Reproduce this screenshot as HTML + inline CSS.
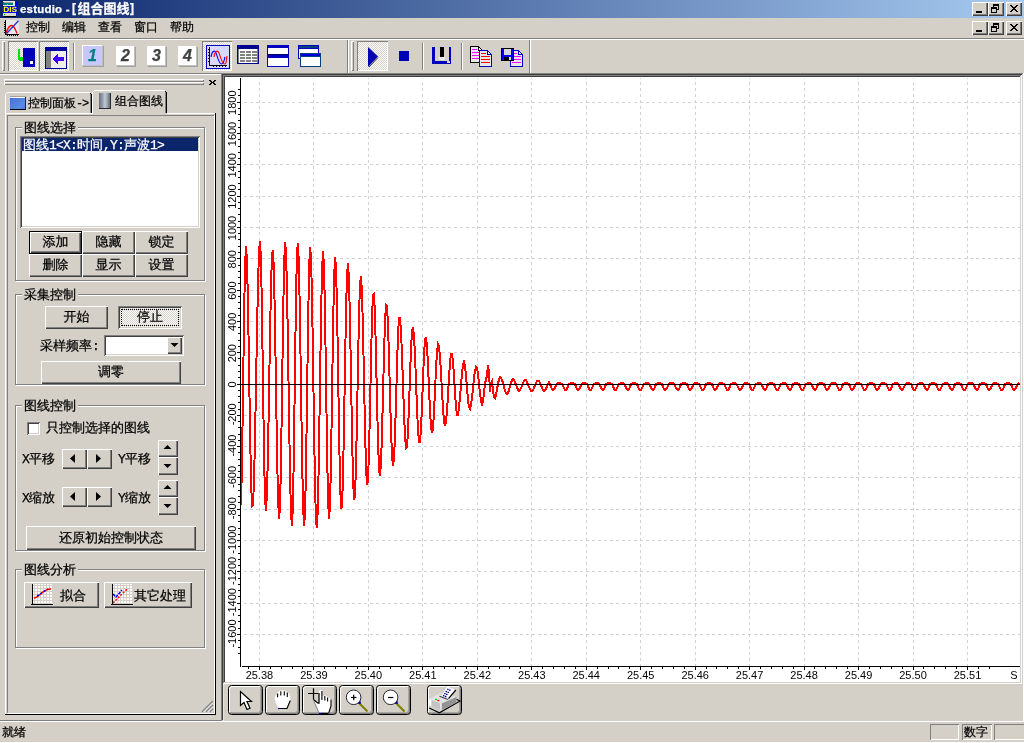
<!DOCTYPE html>
<html lang="zh-CN"><head><meta charset="utf-8"><title>estudio - [组合图线]</title>
<style>
*{box-sizing:border-box;margin:0;padding:0}
html,body{width:1024px;height:743px;overflow:hidden;background:#d4d0c8}
body{position:relative;font-family:"Liberation Sans","WenQuanYi Zen Hei",sans-serif;font-size:13px;color:#000;line-height:1;-webkit-text-stroke:0.25px}
#w{position:absolute;left:0;top:0;width:1024px;height:743px;opacity:0.999}
.a{position:absolute}
.t12{font-size:12px;line-height:12px;white-space:nowrap}
.t13{font-size:13px;line-height:13px;white-space:nowrap}
.btn{position:absolute;background:#d4d0c8;box-shadow:inset 1px 1px #fff,inset -1px -1px #404040,inset -2px -2px #808080;text-align:center;font-size:13px;white-space:nowrap}
.btn span{position:absolute;left:0;right:0;text-align:center;line-height:13px}
.sunk{position:absolute;box-shadow:inset 1px 1px #808080,inset -1px -1px #fff,inset 2px 2px #404040,inset -2px -2px #d4d0c8}
.dith{background:repeating-conic-gradient(#fff 0% 25%,#d4d0c8 0% 50%) 0 0/2px 2px}
.gb{position:absolute;border:1px solid #808080;box-shadow:inset 1px 1px #fff,1px 1px #fff}
.gbl{position:absolute;background:#d4d0c8;font-size:13px;line-height:13px;white-space:nowrap;padding:0 2px}
.hl{position:absolute;height:1px}
.vl{position:absolute;width:1px}
svg{position:absolute;overflow:visible}
svg text{-webkit-text-stroke:0}
.m{font-family:"Liberation Mono","WenQuanYi Zen Hei",monospace}
</style></head>
<body>
<div id="w">
<div class="a" style="left:0;top:0;width:1024px;height:18px;background:linear-gradient(90deg,rgba(10,36,106,0.998) 0%,rgba(166,202,240,0.998) 100%)"></div>
<svg style="left:2px;top:1px" width="16" height="16" viewBox="0 0 16 16" shape-rendering="crispEdges"><rect x="1" y="0" width="12" height="5" fill="#e8e8e8"/><rect x="1" y="1" width="10" height="3" fill="#008080"/><rect x="2" y="1" width="9" height="1" fill="#a0a0a0"/><rect x="5" y="3" width="1" height="1" fill="#00ff00"/><rect x="1" y="5" width="15" height="9" fill="#0000ff"/><rect x="13" y="1" width="3" height="5" fill="#0000ff"/><rect x="1" y="12" width="13" height="3" fill="#d8d8d8"/><rect x="2" y="15" width="12" height="1" fill="#000"/><rect x="2" y="13" width="1" height="1" fill="#00a000"/><text x="1.2" y="11.3" font-family="Liberation Sans,sans-serif" font-weight="bold" font-size="7.5" fill="#ffff00" textLength="14" lengthAdjust="spacingAndGlyphs" style="text-rendering:geometricPrecision">DIS</text></svg>
<div class="a" style="left:20px;top:2px;height:14px;color:#fff;font-weight:bold;white-space:nowrap;font-family:'Liberation Sans','Noto Sans CJK SC',sans-serif;line-height:14px;font-size:11.5px;letter-spacing:0.2px">estudio -</div>
<div class="a" style="left:72px;top:1px;height:14px;color:#fff;font-weight:bold;white-space:nowrap;font-family:'Liberation Sans','Noto Sans CJK SC',sans-serif;line-height:14px;font-size:12px">[</div>
<div class="a" style="left:77.500px;top:2px;height:14px;color:#fff;font-weight:bold;white-space:nowrap;font-family:'Liberation Sans','Noto Sans CJK SC',sans-serif;line-height:14px;font-size:13px;top:2px">组合图线</div>
<div class="a" style="left:130px;top:1px;height:14px;color:#fff;font-weight:bold;white-space:nowrap;font-family:'Liberation Sans','Noto Sans CJK SC',sans-serif;line-height:14px;font-size:12px">]</div>
<div class="a" style="left:972px;top:2px;width:16px;height:14px;background:#d4d0c8;box-shadow:inset 1px 1px #fff,inset -1px -1px #404040,inset -2px -2px #808080"><div class="a" style="left:4px;top:9px;width:6px;height:2px;background:#000"></div></div>
<div class="a" style="left:972px;top:21px;width:16px;height:14px;background:#d4d0c8;box-shadow:inset 1px 1px #fff,inset -1px -1px #404040,inset -2px -2px #808080"><div class="a" style="left:4px;top:9px;width:6px;height:2px;background:#000"></div></div>
<div class="a" style="left:988px;top:2px;width:16px;height:14px;background:#d4d0c8;box-shadow:inset 1px 1px #fff,inset -1px -1px #404040,inset -2px -2px #808080"><div class="a" style="left:5px;top:2px;width:6px;height:6px;border:1px solid #000;border-top-width:2px"></div><div class="a" style="left:3px;top:5px;width:6px;height:6px;border:1px solid #000;border-top-width:2px;background:#d4d0c8"></div></div>
<div class="a" style="left:988px;top:21px;width:16px;height:14px;background:#d4d0c8;box-shadow:inset 1px 1px #fff,inset -1px -1px #404040,inset -2px -2px #808080"><div class="a" style="left:5px;top:2px;width:6px;height:6px;border:1px solid #000;border-top-width:2px"></div><div class="a" style="left:3px;top:5px;width:6px;height:6px;border:1px solid #000;border-top-width:2px;background:#d4d0c8"></div></div>
<div class="a" style="left:1006px;top:2px;width:16px;height:14px;background:#d4d0c8;box-shadow:inset 1px 1px #fff,inset -1px -1px #404040,inset -2px -2px #808080"><svg style="left:4px;top:3px" width="8" height="7" viewBox="0 0 8 7" shape-rendering="crispEdges"><path d="M0 0h2v1h1v1h2v-1h1v-1h2v1h-1v1h-1v1h-1v1h1v1h1v1h1v1h-2v-1h-1v-1h-2v1h-1v1h-2v-1h1v-1h1v-1h1v-1h-1v-1h-1v-1h-1z" fill="#000"/></svg></div>
<div class="a" style="left:1006px;top:21px;width:16px;height:14px;background:#d4d0c8;box-shadow:inset 1px 1px #fff,inset -1px -1px #404040,inset -2px -2px #808080"><svg style="left:4px;top:3px" width="8" height="7" viewBox="0 0 8 7" shape-rendering="crispEdges"><path d="M0 0h2v1h1v1h2v-1h1v-1h2v1h-1v1h-1v1h-1v1h1v1h1v1h1v1h-2v-1h-1v-1h-2v1h-1v1h-2v-1h1v-1h1v-1h1v-1h-1v-1h-1v-1h-1z" fill="#000"/></svg></div>
<svg style="left:3px;top:20px" width="17" height="16" viewBox="0 0 17 16"><rect x="2" y="0" width="14" height="14" fill="#e8e8e8"/><path d="M2.5 0v14.5M2 14.5h14" stroke="#000" stroke-width="1" fill="none" shape-rendering="crispEdges"/><path d="M1 2h1M1 4h1M1 6h1M1 8h1M1 10h1M1 12h1M4 15v1M6 15v1M8 15v1M10 15v1M12 15v1M14 15v1" stroke="#000" stroke-width="1" shape-rendering="crispEdges"/><path d="M3 13.5C5 7 7 5.5 8.5 5.500S12 8 14 13.500" stroke="#ff0000" stroke-width="1.3" fill="none"/><path d="M3.500 13.500L15.500 0.800" stroke="#3030c0" stroke-width="1.300"/></svg>
<div class="a t12" style="left:26px;top:21px">控制</div>
<div class="a t12" style="left:62px;top:21px">编辑</div>
<div class="a t12" style="left:98px;top:21px">查看</div>
<div class="a t12" style="left:134px;top:21px">窗口</div>
<div class="a t12" style="left:170px;top:21px">帮助</div>
<div class="hl" style="left:0px;top:38px;width:1024px;background:#808080"></div>
<div class="hl" style="left:0px;top:39px;width:1024px;background:#fff"></div>
<div class="hl" style="left:0px;top:73px;width:1024px;background:#808080"></div>
<div class="hl" style="left:0px;top:74px;width:221px;background:#fff"></div>
<div class="a" style="left:2px;top:41px;width:3px;height:30px;box-shadow:inset 1px 1px #fff,inset -1px -1px #808080"></div>
<div class="a dith" style="left:8px;top:41px;width:30px;height:30px;box-shadow:inset 1px 1px #808080,inset -1px -1px #fff"></div>
<div class="a dith" style="left:39px;top:41px;width:30px;height:30px;box-shadow:inset 1px 1px #808080,inset -1px -1px #fff"></div>
<svg style="left:8px;top:41px" width="30" height="30" viewBox="0 0 30 30" shape-rendering="crispEdges"><rect x="15" y="7" width="12" height="19" fill="#0000b8"/><rect x="22" y="20" width="3" height="3" fill="#fff"/><path d="M10 8h2v9h3v2h-3v1h-1v-1h-1z" fill="#00e000"/><rect x="12" y="16" width="3" height="4" fill="#00e000"/></svg>
<svg style="left:39px;top:41px" width="30" height="30" viewBox="0 0 30 30" shape-rendering="crispEdges"><rect x="6" y="6" width="22" height="22" fill="#00009c"/><rect x="12" y="10" width="15" height="17" fill="#efede9"/><rect x="7" y="10" width="5" height="17" fill="#808080"/><path d="M14 18l4 -5h1v3h6v4h-6v3h-1z" fill="#4000ff"/></svg>
<div class="vl" style="left:73px;top:43px;height:27px;background:#808080"></div>
<div class="vl" style="left:74px;top:43px;height:27px;background:#fff"></div>
<div class="a" style="left:82px;top:45px;width:21px;height:21px;background:#c8c8ff;box-shadow:1px 1px 0 #a0a0a0,inset -1px -1px #c0c0c0,inset 1px 1px #fff;font-family:'Liberation Sans',sans-serif;font-weight:bold;font-style:italic;font-size:16px;line-height:21px;text-align:center;color:#008080">1</div>
<div class="a" style="left:116px;top:46px;width:19px;height:20px;background:#ffffff;box-shadow:1px 1px 0 #a0a0a0,inset -1px -1px #c0c0c0;font-family:'Liberation Sans',sans-serif;font-weight:bold;font-style:italic;font-size:16px;line-height:20px;text-align:center;color:#404040">2</div>
<div class="a" style="left:147px;top:46px;width:19px;height:20px;background:#ffffff;box-shadow:1px 1px 0 #a0a0a0,inset -1px -1px #c0c0c0;font-family:'Liberation Sans',sans-serif;font-weight:bold;font-style:italic;font-size:16px;line-height:20px;text-align:center;color:#404040">3</div>
<div class="a" style="left:178px;top:46px;width:19px;height:20px;background:#ffffff;box-shadow:1px 1px 0 #a0a0a0,inset -1px -1px #c0c0c0;font-family:'Liberation Sans',sans-serif;font-weight:bold;font-style:italic;font-size:16px;line-height:20px;text-align:center;color:#404040">4</div>
<div class="a dith" style="left:202px;top:41px;width:30px;height:30px;box-shadow:inset 1px 1px #808080,inset -1px -1px #fff"></div>
<svg style="left:206px;top:45px" width="24" height="24" viewBox="0 0 24 24"><rect x="0.5" y="0.5" width="23" height="23" fill="#d8d8ff" stroke="#0000c0" shape-rendering="crispEdges"/><path d="M3.5 2v19M3 20.500h18" stroke="#000" stroke-width="1.4" fill="none" shape-rendering="crispEdges"/><path d="M2 4h1M2 7h1M2 10h1M2 13h1M2 16h1M7 21v1M10 21v1M13 21v1M16 21v1M19 21v1" stroke="#000" shape-rendering="crispEdges"/><path d="M5 12C6 6 8.500 4.500 10 8S13 19 15.500 19 18 15 19 12" stroke="#0000ff" stroke-width="1.100" fill="none"/><path d="M8 12C9 6 11.500 4.500 13 8S16 19 18.500 19 20 15 21 11" stroke="#ff0000" stroke-width="1.100" fill="none"/></svg>
<svg style="left:237px;top:45px" width="22" height="19" viewBox="0 0 22 19" shape-rendering="crispEdges"><rect x="0" y="0" width="22" height="19" fill="#000090"/><rect x="1" y="4" width="20" height="14" fill="#fff"/><rect x="1" y="4" width="1" height="14" fill="#808080"/><rect x="3" y="6" width="5" height="2" fill="#808080"/><rect x="9" y="6" width="5" height="2" fill="#808080"/><rect x="15" y="6" width="5" height="2" fill="#808080"/><rect x="3" y="9" width="5" height="2" fill="#808080"/><rect x="9" y="9" width="5" height="2" fill="#808080"/><rect x="15" y="9" width="5" height="2" fill="#808080"/><rect x="3" y="12" width="5" height="2" fill="#808080"/><rect x="9" y="12" width="5" height="2" fill="#808080"/><rect x="15" y="12" width="5" height="2" fill="#808080"/><rect x="3" y="15" width="5" height="2" fill="#808080"/><rect x="9" y="15" width="5" height="2" fill="#808080"/><rect x="15" y="15" width="5" height="2" fill="#808080"/><rect x="20" y="4" width="1" height="14" fill="#808080"/></svg>
<svg style="left:267px;top:45px" width="22" height="22" viewBox="0 0 22 22" shape-rendering="crispEdges"><rect x="0" y="0" width="22" height="22" fill="#0000c0"/><rect x="1" y="3" width="20" height="6" fill="#fff"/><rect x="1" y="9" width="20" height="1" fill="#000060"/><rect x="1" y="13" width="20" height="8" fill="#fff"/></svg>
<svg style="left:298px;top:45px" width="23" height="22" viewBox="0 0 23 22" shape-rendering="crispEdges"><rect x="0" y="0" width="21" height="14" fill="#0000c0"/><rect x="1" y="1" width="19" height="2" fill="#004080"/><rect x="1" y="4" width="19" height="9" fill="#fff"/><rect x="2" y="8" width="21" height="14" fill="#004080"/><rect x="3" y="9" width="19" height="2" fill="#0000e0"/><rect x="3" y="12" width="19" height="9" fill="#fff"/></svg>
<div class="vl" style="left:347px;top:40px;height:33px;background:#808080"></div>
<div class="vl" style="left:348px;top:40px;height:33px;background:#fff"></div>
<div class="a" style="left:351px;top:41px;width:3px;height:30px;box-shadow:inset 1px 1px #fff,inset -1px -1px #808080"></div>
<div class="a dith" style="left:357px;top:41px;width:31px;height:30px;box-shadow:inset 1px 1px #808080,inset -1px -1px #fff"></div>
<svg style="left:357px;top:41px" width="31" height="30" viewBox="0 0 31 30"><path d="M11 6L21 15.500L11 26z" fill="#0000b4"/><path d="M21 16.500L12 26" stroke="#404040" stroke-width="1"/></svg>
<div class="a" style="left:399px;top:51px;width:10px;height:10px;background:#0000b4"></div>
<div class="vl" style="left:422px;top:43px;height:27px;background:#808080"></div>
<div class="vl" style="left:423px;top:43px;height:27px;background:#fff"></div>
<svg style="left:432px;top:47px" width="20" height="17" viewBox="0 0 20 17" shape-rendering="crispEdges"><path d="M0 0h2.500v14h14v-14h2.500v17h-19z" fill="#0000c0"/><rect x="8" y="0" width="4" height="10" fill="#000"/><rect x="7" y="10" width="6" height="3" fill="#e8e8e8"/><rect x="15" y="14" width="3" height="2" fill="#d4d0c8"/></svg>
<div class="vl" style="left:461px;top:43px;height:27px;background:#808080"></div>
<div class="vl" style="left:462px;top:43px;height:27px;background:#fff"></div>
<svg style="left:470px;top:46px" width="23" height="21" viewBox="0 0 23 21" shape-rendering="crispEdges"><path d="M0.5 0.5h8l4 4v12h-12z" fill="#e8e8e8" stroke="#000"/><path d="M8.5 0.5v4h4" fill="none" stroke="#000"/><rect x="2" y="3" width="5" height="1" fill="#ff00ff"/><rect x="2" y="6" width="9" height="1" fill="#ff00ff"/><rect x="2" y="9" width="9" height="1" fill="#ff00ff"/><rect x="2" y="12" width="9" height="1" fill="#ff00ff"/><path d="M9.5 4.5h8l4 4v12h-12z" fill="#e8e8e8" stroke="#0000c0"/><path d="M17.5 4.5v4h4" fill="none" stroke="#0000c0"/><rect x="11" y="7" width="5" height="1" fill="#ff0000"/><rect x="11" y="10" width="9" height="1" fill="#ff0000"/><rect x="11" y="13" width="9" height="1" fill="#ff0000"/><rect x="11" y="16" width="9" height="1" fill="#ff0000"/></svg>
<svg style="left:501px;top:48px" width="23" height="19" viewBox="0 0 23 19" shape-rendering="crispEdges"><path d="M9.5 2.5h8l4 4v12h-12z" fill="#e8e8e8" stroke="#0000c0"/><path d="M17.5 2.5v4h4" fill="none" stroke="#0000c0"/><rect x="11" y="5" width="5" height="1" fill="#ff00ff"/><rect x="11" y="8" width="9" height="1" fill="#ff00ff"/><rect x="11" y="11" width="9" height="1" fill="#ff00ff"/><rect x="11" y="14" width="9" height="1" fill="#ff00ff"/><rect x="0" y="0" width="13" height="13" fill="#000"/><rect x="1" y="1" width="11" height="11" fill="#0000ff"/><rect x="3" y="1" width="7" height="6" fill="#d8d8d8"/><rect x="3" y="9" width="7" height="3" fill="#000"/><rect x="8" y="9" width="2" height="3" fill="#d8d8d8"/></svg>
<div class="vl" style="left:529px;top:40px;height:33px;background:#808080"></div>
<div class="vl" style="left:530px;top:40px;height:33px;background:#fff"></div>
<div class="hl" style="left:0px;top:721px;width:1024px;background:#fff"></div>
<div class="a t12" style="left:2px;top:726px">就绪</div>
<div class="a" style="left:930px;top:724px;width:29px;height:16px;box-shadow:inset 1px 1px #808080,inset -1px -1px #fff"></div>
<div class="a" style="left:962px;top:724px;width:30px;height:16px;box-shadow:inset 1px 1px #808080,inset -1px -1px #fff"></div>
<div class="a" style="left:994px;top:724px;width:32px;height:16px;box-shadow:inset 1px 1px #808080,inset -1px -1px #fff"></div>
<div class="a t12" style="left:964px;top:726px">数字</div>
<div class="hl" style="left:0px;top:742px;width:1024px;background:#fff"></div>
<div class="a" style="left:4px;top:79px;width:200px;height:3px;box-shadow:inset 1px 1px #fff,inset -1px -1px #808080"></div>
<div class="a" style="left:4px;top:82px;width:200px;height:3px;box-shadow:inset 1px 1px #fff,inset -1px -1px #808080"></div>
<svg style="left:209px;top:80px" width="7" height="5" viewBox="0 0 7 5" shape-rendering="crispEdges"><path d="M0 0h2v1h1v1h1v-1h1v-1h2v1h-1v1h-1v1h1v1h1v1h-2v-1h-1v-1h-1v1h-1v1h-2v-1h1v-1h1v-1h-1v-1h-1z" fill="#000"/></svg>
<div class="hl" style="left:0px;top:720px;width:221px;background:#808080"></div>
<div class="vl" style="left:5px;top:113px;height:601px;background:#fff"></div>
<div class="hl" style="left:5px;top:113px;width:210px;background:#fff"></div>
<div class="vl" style="left:7px;top:115px;height:598px;background:#808080"></div>
<div class="hl" style="left:7px;top:115px;width:207px;background:#808080"></div>
<div class="vl" style="left:214px;top:115px;height:599px;background:#fff"></div>
<div class="hl" style="left:7px;top:713px;width:208px;background:#fff"></div>
<div class="vl" style="left:215px;top:113px;height:602px;background:#000"></div>
<div class="hl" style="left:5px;top:714px;width:211px;background:#000"></div>
<div class="hl" style="left:7px;top:92px;width:83px;background:#fff"></div>
<div class="vl" style="left:5px;top:94px;height:19px;background:#fff"></div>
<div class="a" style="left:6px;top:93px;width:1px;height:1px;background:#fff"></div>
<div class="vl" style="left:90px;top:94px;height:19px;background:#808080"></div>
<div class="vl" style="left:91px;top:94px;height:19px;background:#000"></div>
<div class="a" style="left:90px;top:93px;width:1px;height:1px;background:#000"></div>
<div class="a" style="left:10px;top:96px;width:16px;height:14px;background:linear-gradient(135deg,#3f6fd2,#5a8ae6 70%,#4a7cdc)"></div>
<div class="hl" style="left:10px;top:96px;width:16px;background:#a0a0a0"></div>
<div class="hl" style="left:10px;top:97px;width:15px;background:#fff"></div>
<div class="hl" style="left:10px;top:109px;width:16px;background:#000"></div>
<div class="vl" style="left:25px;top:97px;height:12px;background:#10206a"></div>
<div class="a t12" style="left:28px;top:97px">控制面板<span class="m" style="letter-spacing:-1.2px">-&gt;</span></div>
<div class="a" style="left:92px;top:90px;width:75px;height:24px;background:#d4d0c8"></div>
<div class="hl" style="left:94px;top:90px;width:71px;background:#fff"></div>
<div class="vl" style="left:92px;top:92px;height:22px;background:#fff"></div>
<div class="a" style="left:93px;top:91px;width:1px;height:1px;background:#fff"></div>
<div class="vl" style="left:165px;top:92px;height:21px;background:#808080"></div>
<div class="vl" style="left:166px;top:92px;height:21px;background:#000"></div>
<div class="a" style="left:165px;top:91px;width:1px;height:1px;background:#000"></div>
<div class="a" style="left:99px;top:93px;width:12px;height:16px;background:linear-gradient(90deg,#68707c,#98a0b0 30%,#c4c8d4 50%,#98a0b0 70%,#505860);box-shadow:inset -1px -1px #282c30"></div>
<div class="a t12" style="left:115px;top:95px">组合图线</div>
<div class="a" style="left:15px;top:127px;width:190px;height:154px;border:1px solid #808080"></div><div class="a" style="left:16px;top:128px;width:190px;height:154px;border:1px solid #fff;border-right-color:#fff;border-bottom-color:#fff;clip-path:polygon(0 0,188px 0,188px 1px,1px 1px,1px 152px,0 152px,0 154px,190px 154px,190px 0,189px 0,189px 153px,0 153px)"></div><div class="gbl" style="left:22px;top:121px">图线选择</div>
<div class="sunk" style="left:20px;top:136px;width:180px;height:92px;background:#fff"></div>
<div class="a" style="left:22px;top:138px;width:176px;height:13px;background:rgba(10,36,106,0.998)"></div>
<div class="a t13" style="left:23px;top:138px;color:#fff;letter-spacing:0">图线<span class="m" style="letter-spacing:-0.8px">1&lt;X:</span>时间<span class="m" style="letter-spacing:-0.8px">,Y:</span>声波<span class="m" style="letter-spacing:-0.8px">1&gt;</span></div>
<div class="a" style="left:29px;top:231px;width:53px;height:23px;background:#000"></div><div class="btn" style="left:30px;top:232px;width:51px;height:21px"><span style="top:3px">添加</span></div>
<div class="btn" style="left:82px;top:231px;width:53px;height:23px"><span style="top:4px">隐藏</span></div>
<div class="btn" style="left:135px;top:231px;width:53px;height:23px"><span style="top:4px">锁定</span></div>
<div class="btn" style="left:29px;top:254px;width:53px;height:23px"><span style="top:4px">删除</span></div>
<div class="btn" style="left:82px;top:254px;width:53px;height:23px"><span style="top:4px">显示</span></div>
<div class="btn" style="left:135px;top:254px;width:53px;height:23px"><span style="top:4px">设置</span></div>
<div class="a" style="left:15px;top:294px;width:190px;height:91px;border:1px solid #808080"></div><div class="a" style="left:16px;top:295px;width:190px;height:91px;border:1px solid #fff;border-right-color:#fff;border-bottom-color:#fff;clip-path:polygon(0 0,188px 0,188px 1px,1px 1px,1px 89px,0 89px,0 91px,190px 91px,190px 0,189px 0,189px 90px,0 90px)"></div><div class="gbl" style="left:22px;top:288px">采集控制</div>
<div class="btn" style="left:45px;top:306px;width:63px;height:23px"><span style="top:4px">开始</span></div>
<div class="a dith" style="left:118px;top:306px;width:64px;height:23px;box-shadow:inset 1px 1px #808080,inset -1px -1px #fff,inset 2px 2px #404040,inset -2px -2px #d4d0c8;font-size:13px"><div class="a" style="left:3px;top:3px;right:3px;bottom:3px;border:1px dotted #000"></div><span class="a" style="left:0;right:0;top:4px;text-align:center;line-height:13px">停止</span></div>
<div class="a t13" style="left:40px;top:339px">采样频率<span class="m">:</span></div>
<div class="sunk" style="left:104px;top:335px;width:80px;height:21px;background:#fff"></div>
<div class="btn" style="left:167px;top:337px;width:15px;height:17px"><svg style="left:0;top:0" width="15" height="17" viewBox="0 0 15 17"><path d="M3.5 6h8l-4 4z" fill="#000"/></svg></div>
<div class="btn" style="left:41px;top:361px;width:140px;height:23px"><span style="top:4px">调零</span></div>
<div class="a" style="left:15px;top:405px;width:190px;height:146px;border:1px solid #808080"></div><div class="a" style="left:16px;top:406px;width:190px;height:146px;border:1px solid #fff;border-right-color:#fff;border-bottom-color:#fff;clip-path:polygon(0 0,188px 0,188px 1px,1px 1px,1px 144px,0 144px,0 146px,190px 146px,190px 0,189px 0,189px 145px,0 145px)"></div><div class="gbl" style="left:22px;top:399px">图线控制</div>
<div class="sunk" style="left:27px;top:422px;width:13px;height:13px;background:#fff"></div>
<div class="a t13" style="left:46px;top:421px">只控制选择的图线</div>
<div class="a t13" style="left:22px;top:452px"><span class="m" style="letter-spacing:-0.8px">X</span>平移</div>
<div class="a t13" style="left:118px;top:452px"><span class="m" style="letter-spacing:-0.8px">Y</span>平移</div>
<div class="btn" style="left:62px;top:449px;width:25px;height:20px"><svg style="left:0;top:0" width="25" height="20" viewBox="0 0 25 20"><path d="M13 5v9l-5 -4.500z" fill="#000"/></svg></div>
<div class="btn" style="left:87px;top:449px;width:25px;height:20px"><svg style="left:0;top:0" width="25" height="20" viewBox="0 0 25 20"><path d="M9 5v9l5 -4.500z" fill="#000"/></svg></div>
<div class="btn" style="left:158px;top:440px;width:20px;height:17px"><svg style="left:0;top:0" width="20" height="17" viewBox="0 0 20 17"><path d="M5.5 9h8l-4 -4z" fill="#000"/></svg></div>
<div class="btn" style="left:158px;top:457px;width:20px;height:18px"><svg style="left:0;top:0" width="20" height="18" viewBox="0 0 20 18"><path d="M5.5 7h8l-4 4z" fill="#000"/></svg></div>
<div class="a t13" style="left:22px;top:491px"><span class="m" style="letter-spacing:-0.8px">X</span>缩放</div>
<div class="a t13" style="left:118px;top:491px"><span class="m" style="letter-spacing:-0.8px">Y</span>缩放</div>
<div class="btn" style="left:62px;top:487px;width:25px;height:20px"><svg style="left:0;top:0" width="25" height="20" viewBox="0 0 25 20"><path d="M13 5v9l-5 -4.500z" fill="#000"/></svg></div>
<div class="btn" style="left:87px;top:487px;width:25px;height:20px"><svg style="left:0;top:0" width="25" height="20" viewBox="0 0 25 20"><path d="M9 5v9l5 -4.500z" fill="#000"/></svg></div>
<div class="btn" style="left:158px;top:480px;width:20px;height:17px"><svg style="left:0;top:0" width="20" height="17" viewBox="0 0 20 17"><path d="M5.5 9h8l-4 -4z" fill="#000"/></svg></div>
<div class="btn" style="left:158px;top:497px;width:20px;height:18px"><svg style="left:0;top:0" width="20" height="18" viewBox="0 0 20 18"><path d="M5.5 7h8l-4 4z" fill="#000"/></svg></div>
<div class="btn" style="left:26px;top:526px;width:170px;height:24px"><span style="top:5px">还原初始控制状态</span></div>
<div class="a" style="left:15px;top:569px;width:190px;height:79px;border:1px solid #808080"></div><div class="a" style="left:16px;top:570px;width:190px;height:79px;border:1px solid #fff;border-right-color:#fff;border-bottom-color:#fff;clip-path:polygon(0 0,188px 0,188px 1px,1px 1px,1px 77px,0 77px,0 79px,190px 79px,190px 0,189px 0,189px 78px,0 78px)"></div><div class="gbl" style="left:22px;top:563px">图线分析</div>
<div class="btn" style="left:24px;top:582px;width:75px;height:26px"><svg style="left:7px;top:2px" width="22" height="21" viewBox="0 0 22 21"><rect x="1" y="0" width="21" height="19" fill="#fff"/><path d="M1 1.5h21M1 4.5h21M1 7.5h21M1 10.5h21M1 13.5h21M1 16.5h21M1 19.5h21M3.5 0v19M6.5 0v19M9.5 0v19M12.5 0v19M15.5 0v19M18.5 0v19M21.5 0v19" stroke="#d4d0c8" stroke-width="1" shape-rendering="crispEdges"/><path d="M1.500 0v20.500M0 20.500h22" stroke="#000" stroke-width="1" fill="none" shape-rendering="crispEdges"/><path d="M3 14C8 14 11 5 20 5" stroke="#ff0000" stroke-width="1.6" fill="none"/><path d="M6 12L17 5" stroke="#0000ff" stroke-width="1.500" stroke-dasharray="2 2"/></svg><span style="left:36px;right:auto;top:7px">拟合</span></div>
<div class="btn" style="left:104px;top:582px;width:88px;height:26px"><svg style="left:7px;top:2px" width="22" height="21" viewBox="0 0 22 21"><rect x="1" y="0" width="21" height="19" fill="#fff"/><path d="M1 1.5h21M1 4.5h21M1 7.5h21M1 10.5h21M1 13.5h21M1 16.5h21M1 19.5h21M3.5 0v19M6.5 0v19M9.5 0v19M12.5 0v19M15.5 0v19M18.5 0v19M21.5 0v19" stroke="#d4d0c8" stroke-width="1" shape-rendering="crispEdges"/><path d="M1.500 0v20.500M0 20.500h22" stroke="#000" stroke-width="1" fill="none" shape-rendering="crispEdges"/><path d="M2 19L17 4" stroke="#ff0000" stroke-width="1.500" stroke-dasharray="2 1.500"/><path d="M2 10L5 13L11 6" stroke="#0000ff" stroke-width="1.500" fill="none" stroke-dasharray="3 1"/></svg><span style="left:30px;right:auto;top:7px">其它处理</span></div>
<svg style="left:201px;top:700px" width="13" height="13" viewBox="0 0 13 13"><path d="M12 1L1 12M12 5L5 12M12 9L9 12" stroke="#808080" stroke-width="1.500"/><path d="M12 2.500L2.500 12M12 6.500L6.500 12M12 10.500L10.500 12" stroke="#fff" stroke-width="0.8"/></svg>
<div class="a" style="left:221px;top:73px;width:803px;height:648px;background:#d4d0c8"></div>
<div class="a" style="left:225px;top:77px;width:795px;height:605px;background:#fff"></div>
<div class="hl" style="left:221px;top:73px;width:803px;background:#808080"></div>
<div class="vl" style="left:221px;top:73px;height:648px;background:#808080"></div>
<div class="hl" style="left:222px;top:74px;width:801px;background:#404040"></div>
<div class="vl" style="left:222px;top:74px;height:646px;background:#404040"></div>
<div class="vl" style="left:1022px;top:74px;height:646px;background:#d4d0c8"></div>
<div class="vl" style="left:1023px;top:73px;height:648px;background:#fff"></div>
<div class="hl" style="left:223px;top:75px;width:799px;background:#808080"></div>
<div class="vl" style="left:223px;top:75px;height:608px;background:#808080"></div>
<div class="hl" style="left:224px;top:76px;width:797px;background:#404040"></div>
<div class="vl" style="left:224px;top:76px;height:606px;background:#404040"></div>
<div class="vl" style="left:1020px;top:76px;height:607px;background:#d4d0c8"></div>
<div class="vl" style="left:1021px;top:75px;height:609px;background:#fff"></div>
<div class="hl" style="left:224px;top:682px;width:797px;background:#d4d0c8"></div>
<div class="hl" style="left:223px;top:683px;width:799px;background:#fff"></div>
<div class="vl" style="left:223px;top:684px;height:37px;background:#e6e4df"></div>
<svg style="left:0;top:0" width="1024" height="743" viewBox="0 0 1024 743" font-family="Liberation Sans,sans-serif" font-size="11"><path d="M244 634.5H1020M244 603.5H1020M244 571.5H1020M244 540.5H1020M244 509.5H1020M244 477.5H1020M244 446.5H1020M244 415.5H1020M244 384.5H1020M244 352.5H1020M244 321.5H1020M244 290.5H1020M244 258.5H1020M244 227.5H1020M244 196.5H1020M244 164.5H1020M244 133.5H1020M244 102.5H1020" stroke="#d2d2d2" stroke-width="1" stroke-dasharray="3 3" fill="none" shape-rendering="crispEdges"/><path d="M259.5 78V666M313.5 78V666M368.5 78V666M422.5 78V666M477.5 78V666M531.5 78V666M586.5 78V666M640.5 78V666M695.5 78V666M749.5 78V666M804.5 78V666M858.5 78V666M913.5 78V666M967.5 78V666" stroke="#d2d2d2" stroke-width="1" stroke-dasharray="3 3" stroke-dashoffset="2" fill="none" shape-rendering="crispEdges"/><path d="M241 505L242 462L243 394L244 321L245 266L246 246L247 262L248 304L249 365L250 428L251 479L252 506L253 505L254 481L255 439L256 386L257 331L258 284L259 252L260 241L261 260L262 313L263 384L264 452L265 499L266 511L267 492L268 451L269 395L270 336L271 286L272 255L273 250L274 274L275 324L276 387L277 450L278 497L279 519L280 507L281 462L282 395L283 324L284 268L285 242L286 251L287 289L288 347L289 414L290 473L291 514L292 526L293 502L294 444L295 368L296 298L297 251L298 243L299 268L300 321L301 387L302 453L303 503L304 526L305 514L306 469L307 401L308 329L309 273L310 247L311 257L312 296L313 357L314 425L315 484L316 521L317 528L318 502L319 450L320 383L321 319L322 271L323 251L324 266L325 312L326 378L327 446L328 498L329 519L330 506L331 461L332 398L333 332L334 281L335 257L336 267L337 306L338 365L339 428L340 481L341 509L342 506L343 476L344 426L345 366L346 312L347 275L348 263L349 280L350 321L351 376L352 433L353 478L354 500L355 495L356 465L357 418L358 364L359 316L360 284L361 276L362 293L363 330L364 379L365 428L366 466L367 485L368 480L369 452L370 408L371 360L372 318L373 295L374 294L375 316L376 354L377 400L378 441L379 469L380 476L381 463L382 433L383 394L384 354L385 322L386 305L387 306L388 325L389 357L390 394L391 430L392 456L393 466L394 459L395 436L396 402L397 366L398 335L399 318L400 318L401 331L402 355L403 384L404 413L405 436L406 448L407 447L408 431L409 406L410 376L411 349L412 332L413 327L414 336L415 355L416 381L417 408L418 430L419 442L420 442L421 429L422 406L423 379L424 355L425 340L426 337L427 346L428 365L429 388L430 411L431 427L432 433L433 428L434 412L435 391L436 369L437 352L438 344L439 346L440 357L441 373L442 391L443 408L444 421L445 426L446 422L447 411L448 395L449 378L450 363L451 354L452 354L453 362L454 376L455 393L456 407L457 415L458 415L459 408L460 397L461 385L462 373L463 365L464 362L465 366L466 376L467 388L468 400L469 407L470 409L471 405L472 398L473 388L474 378L475 371L476 367L477 368L478 374L479 384L480 393L481 401L482 404L483 401L484 393L485 384L486 379L487 376L488 365L489 372L490 392L491 383L492 381L493 390L494 397L495 398L496 395L497 389L498 384L499 379L500 377L501 378L502 380L503 383L504 387L505 391L506 393L507 394L508 393L509 390L510 386L511 383L512 380L513 379L514 380L515 382L516 385L517 387L518 390L519 391L520 390L521 388L522 386L523 383L524 381L525 380L526 380L527 382L528 385L529 387L530 389L531 391L532 391L533 390L534 388L535 385L536 383L537 381L538 381L539 381L540 383L541 385L542 388L543 390L544 391L545 390L546 389L547 386L548 384L549 382L550 384L551 387L552 389L553 390L554 389L555 388L556 385L557 384L558 383L559 383L560 383L561 384L562 384L563 386L564 388L565 390L566 390L567 389L568 386L569 384L570 384L571 383L572 383L573 383L574 384L575 384L576 387L577 389L578 390L579 389L580 388L581 385L582 384L583 383L584 383L585 383L586 384L587 384L588 386L589 389L590 390L591 390L592 388L593 386L594 384L595 384L596 383L597 383L598 383L599 384L600 385L601 388L602 389L603 390L604 389L605 387L606 384L607 384L608 383L609 383L610 383L611 384L612 384L613 386L614 389L615 390L616 390L617 388L618 386L619 384L620 384L621 383L622 383L623 383L624 384L625 385L626 388L627 389L628 390L629 389L630 387L631 384L632 384L633 383L634 383L635 383L636 384L637 384L638 387L639 389L640 390L641 390L642 388L643 386L644 384L645 384L646 383L647 383L648 383L649 384L650 385L651 388L652 389L653 390L654 389L655 387L656 384L657 384L658 383L659 383L660 383L661 384L662 384L663 387L664 389L665 390L666 389L667 388L668 386L669 384L670 383L671 383L672 383L673 383L674 384L675 386L676 388L677 389L678 390L679 389L680 387L681 384L682 384L683 383L684 383L685 383L686 384L687 384L688 387L689 389L690 390L691 389L692 388L693 385L694 384L695 383L696 383L697 383L698 384L699 384L700 386L701 388L702 390L703 390L704 389L705 387L706 384L707 384L708 383L709 383L710 383L711 384L712 384L713 387L714 389L715 390L716 389L717 388L718 385L719 384L720 383L721 383L722 383L723 384L724 384L725 386L726 388L727 390L728 390L729 389L730 386L731 384L732 384L733 383L734 383L735 383L736 384L737 385L738 387L739 389L740 390L741 389L742 388L743 385L744 384L745 383L746 383L747 383L748 384L749 384L750 386L751 389L752 390L753 390L754 388L755 386L756 384L757 384L758 383L759 383L760 383L761 384L762 385L763 388L764 389L765 390L766 389L767 387L768 384L769 384L770 383L771 383L772 383L773 384L774 384L775 387L776 389L777 390L778 390L779 388L780 386L781 384L782 384L783 383L784 383L785 383L786 384L787 385L788 388L789 389L790 390L791 389L792 387L793 384L794 384L795 383L796 383L797 383L798 384L799 384L800 387L801 389L802 390L803 390L804 388L805 386L806 384L807 384L808 383L809 383L810 383L811 384L812 385L813 388L814 389L815 390L816 389L817 387L818 384L819 384L820 383L821 383L822 383L823 384L824 384L825 387L826 389L827 390L828 389L829 388L830 385L831 384L832 383L833 383L834 383L835 383L836 384L837 386L838 388L839 390L840 390L841 389L842 387L843 384L844 384L845 383L846 383L847 383L848 384L849 384L850 387L851 389L852 390L853 389L854 388L855 385L856 384L857 383L858 383L859 383L860 384L861 384L862 386L863 388L864 390L865 390L866 389L867 387L868 384L869 384L870 383L871 383L872 383L873 384L874 384L875 387L876 389L877 390L878 389L879 388L880 385L881 384L882 383L883 383L884 383L885 384L886 384L887 386L888 388L889 390L890 390L891 389L892 386L893 384L894 384L895 383L896 383L897 383L898 384L899 385L900 388L901 389L902 390L903 389L904 387L905 385L906 384L907 383L908 383L909 383L910 384L911 384L912 386L913 389L914 390L915 390L916 388L917 386L918 384L919 384L920 383L921 383L922 383L923 384L924 385L925 388L926 389L927 390L928 389L929 387L930 384L931 384L932 383L933 383L934 383L935 384L936 384L937 387L938 389L939 390L940 390L941 388L942 386L943 384L944 384L945 383L946 383L947 383L948 384L949 385L950 388L951 389L952 390L953 389L954 387L955 384L956 384L957 383L958 383L959 383L960 384L961 384L962 387L963 389L964 390L965 390L966 388L967 386L968 384L969 383L970 383L971 383L972 383L973 384L974 385L975 388L976 389L977 390L978 389L979 387L980 384L981 384L982 383L983 383L984 383L985 384L986 384L987 387L988 389L989 390L990 389L991 388L992 385L993 384L994 383L995 383L996 383L997 384L998 384L999 386L1000 388L1001 390L1002 390L1003 389L1004 387L1005 384L1006 384L1007 383L1008 383L1009 383L1010 384L1011 384L1012 387L1013 389L1014 390L1015 389L1016 388L1017 385L1018 384L1019 383" stroke="#ff0000" stroke-width="2" fill="none" stroke-linejoin="miter" shape-rendering="crispEdges"/><path d="M241 384.500H1020" stroke="#000" stroke-width="1" shape-rendering="crispEdges"/><path d="M240.500 78V667M242 666.500H1020M238 653.5H240M238 647.5H240M238 640.5H240M237 634.5H240M238 628.5H240M238 621.5H240M238 615.5H240M238 609.5H240M237 603.5H240M238 596.5H240M238 590.5H240M238 584.5H240M238 578.5H240M237 571.5H240M238 565.5H240M238 559.5H240M238 553.5H240M238 546.5H240M237 540.5H240M238 534.5H240M238 528.5H240M238 521.5H240M238 515.5H240M237 509.5H240M238 502.5H240M238 496.5H240M238 490.5H240M238 484.5H240M237 477.5H240M238 471.5H240M238 465.5H240M238 459.5H240M238 452.5H240M237 446.5H240M238 440.5H240M238 434.5H240M238 427.5H240M238 421.5H240M237 415.5H240M238 409.5H240M238 402.5H240M238 396.5H240M238 390.5H240M237 384.5H240M238 377.5H240M238 371.5H240M238 365.5H240M238 358.5H240M237 352.5H240M238 346.5H240M238 340.5H240M238 333.5H240M238 327.5H240M237 321.5H240M238 315.5H240M238 308.5H240M238 302.5H240M238 296.5H240M237 290.5H240M238 283.5H240M238 277.5H240M238 271.5H240M238 265.5H240M237 258.5H240M238 252.5H240M238 246.5H240M238 239.5H240M238 233.5H240M237 227.5H240M238 221.5H240M238 214.5H240M238 208.5H240M238 202.5H240M237 196.5H240M238 189.5H240M238 183.5H240M238 177.5H240M238 171.5H240M237 164.5H240M238 158.5H240M238 152.5H240M238 146.5H240M238 139.5H240M237 133.5H240M238 127.5H240M238 120.5H240M238 114.5H240M238 108.5H240M237 102.5H240M238 95.5H240M238 89.5H240M248.5 667V669M259.5 667V670M270.5 667V669M281.5 667V669M292.5 667V669M302.5 667V669M313.5 667V670M324.5 667V669M335.5 667V669M346.5 667V669M357.5 667V669M368.5 667V670M379.5 667V669M390.5 667V669M401.5 667V669M411.5 667V669M422.5 667V670M433.5 667V669M444.5 667V669M455.5 667V669M466.5 667V669M477.5 667V670M488.5 667V669M499.5 667V669M509.5 667V669M520.5 667V669M531.5 667V670M542.5 667V669M553.5 667V669M564.5 667V669M575.5 667V669M586.5 667V670M597.5 667V669M608.5 667V669M618.5 667V669M629.5 667V669M640.5 667V670M651.5 667V669M662.5 667V669M673.5 667V669M684.5 667V669M695.5 667V670M706.5 667V669M716.5 667V669M727.5 667V669M738.5 667V669M749.5 667V670M760.5 667V669M771.5 667V669M782.5 667V669M793.5 667V669M804.5 667V670M814.5 667V669M825.5 667V669M836.5 667V669M847.5 667V669M858.5 667V670M869.5 667V669M880.5 667V669M891.5 667V669M902.5 667V669M913.5 667V670M923.5 667V669M934.5 667V669M945.5 667V669M956.5 667V669M967.5 667V670M978.5 667V669M989.5 667V669" stroke="#000" stroke-width="1" fill="none" shape-rendering="crispEdges"/><g style="opacity:0.999"><text transform="translate(236 633.5) rotate(-90)" text-anchor="middle">-1600</text><text transform="translate(236 602.2) rotate(-90)" text-anchor="middle">-1400</text><text transform="translate(236 570.9) rotate(-90)" text-anchor="middle">-1200</text><text transform="translate(236 539.6) rotate(-90)" text-anchor="middle">-1000</text><text transform="translate(236 508.2) rotate(-90)" text-anchor="middle">-800</text><text transform="translate(236 476.9) rotate(-90)" text-anchor="middle">-600</text><text transform="translate(236 445.6) rotate(-90)" text-anchor="middle">-400</text><text transform="translate(236 414.3) rotate(-90)" text-anchor="middle">-200</text><text transform="translate(236 384.5) rotate(-90)" text-anchor="middle">0</text><text transform="translate(236 353.2) rotate(-90)" text-anchor="middle">200</text><text transform="translate(236 321.9) rotate(-90)" text-anchor="middle">400</text><text transform="translate(236 290.6) rotate(-90)" text-anchor="middle">600</text><text transform="translate(236 259.3) rotate(-90)" text-anchor="middle">800</text><text transform="translate(236 228.0) rotate(-90)" text-anchor="middle">1000</text><text transform="translate(236 196.6) rotate(-90)" text-anchor="middle">1200</text><text transform="translate(236 165.3) rotate(-90)" text-anchor="middle">1400</text><text transform="translate(236 134.0) rotate(-90)" text-anchor="middle">1600</text><text transform="translate(236 102.7) rotate(-90)" text-anchor="middle">1800</text><text x="259.4" y="679" text-anchor="middle">25.38</text><text x="313.9" y="679" text-anchor="middle">25.39</text><text x="368.3" y="679" text-anchor="middle">25.40</text><text x="422.8" y="679" text-anchor="middle">25.41</text><text x="477.3" y="679" text-anchor="middle">25.42</text><text x="531.8" y="679" text-anchor="middle">25.43</text><text x="586.2" y="679" text-anchor="middle">25.44</text><text x="640.7" y="679" text-anchor="middle">25.45</text><text x="695.2" y="679" text-anchor="middle">25.46</text><text x="749.6" y="679" text-anchor="middle">25.47</text><text x="804.1" y="679" text-anchor="middle">25.48</text><text x="858.6" y="679" text-anchor="middle">25.49</text><text x="913.0" y="679" text-anchor="middle">25.50</text><text x="967.5" y="679" text-anchor="middle">25.51</text><text x="1014" y="679" text-anchor="middle">S</text></g></svg>
<div class="a" style="left:228px;top:685px;width:35px;height:30px;border:1px solid #000;border-radius:3.5px;background:#d4d0c8;box-shadow:inset 1px 1px #fff,inset -1px -1px #808080,inset -2px -2px #a8a49c"><svg style="left:0;top:0" width="33" height="28" viewBox="0 0 33 28"><path d="M11.5 5.500V19.500L15 16.500L18 23.500L21 22.200L18 15.500H22.500z" fill="#fff" stroke="#000" stroke-width="1.2" stroke-linejoin="miter"/></svg></div>
<div class="a" style="left:265px;top:685px;width:35px;height:30px;border:1px solid #000;border-radius:3.5px;background:#d4d0c8;box-shadow:inset 1px 1px #fff,inset -1px -1px #808080,inset -2px -2px #a8a49c"><svg style="left:0;top:0" width="33" height="28" viewBox="0 0 33 28"><path d="M12 22.500L8.500 14V11L10.500 8L12 6L14 4.500H18.500L21.500 6L23.500 8L24.300 12V14.500L21 22.500z" fill="#fff"/><path d="M11.600 7.500V11.200M14.800 5.200V9.500M18.300 5.200V9.500M21.300 6.500V11" stroke="#000" stroke-width="1.100" fill="none"/><path d="M14 22.500H21L24.300 14.500" stroke="#000" stroke-width="1.200" fill="none"/><path d="M12 22.500H14.200" stroke="#0000c0" stroke-width="1.200"/><path d="M12 22L8.500 14V11L10 8.500" stroke="#b0b0b0" stroke-width="0.700" fill="none" stroke-dasharray="1 1"/></svg></div>
<div class="a" style="left:302px;top:685px;width:35px;height:30px;border:1px solid #000;border-radius:3.5px;background:#d4d0c8;box-shadow:inset 1px 1px #fff,inset -1px -1px #808080,inset -2px -2px #a8a49c"><svg style="left:0;top:0" width="33" height="28" viewBox="0 0 33 28"><path d="M16 4.800L17.500 4H19.200V10L22 9.500L25 11L28 13.500V20L25.500 27.500H16L10.500 14.500L11.500 13.500L15.500 16.500z" fill="#fff"/><path d="M5 7.500H15M10.500 2.300V13.500" stroke="#000" stroke-width="1.200"/><path d="M10.500 13.500L15 17.200H16V7" stroke="#000" stroke-width="1.300" fill="none"/><path d="M18.900 5V14M21.800 10V14.500M24.600 11.500V15.500M28 13.500V20L25.700 27" stroke="#000" stroke-width="1.100" fill="none"/><path d="M10.800 15L16 27" stroke="#606060" stroke-width="0.800"/><path d="M18 27.300H25.500" stroke="#000" stroke-width="1.400"/><path d="M16 27.300H18.200" stroke="#0000c0" stroke-width="1.400"/></svg></div>
<div class="a" style="left:339px;top:685px;width:35px;height:30px;border:1px solid #000;border-radius:3.5px;background:#d4d0c8;box-shadow:inset 1px 1px #fff,inset -1px -1px #808080,inset -2px -2px #a8a49c"><svg style="left:0;top:0" width="33" height="28" viewBox="0 0 33 28"><path d="M19.500 17.500L27.500 25.500" stroke="#808000" stroke-width="2.200"/><path d="M17.200 17.800l3.400 -3.400l0.200 3.600z" fill="#000090"/><circle cx="13.600" cy="11.300" r="7.300" fill="#fff" stroke="#101020" stroke-width="0.900"/><path d="M11 11.500H16.400" stroke="#000" stroke-width="1.200"/><path d="M13.700 8.800V14.200" stroke="#000" stroke-width="1.200"/></svg></div>
<div class="a" style="left:376px;top:685px;width:35px;height:30px;border:1px solid #000;border-radius:3.5px;background:#d4d0c8;box-shadow:inset 1px 1px #fff,inset -1px -1px #808080,inset -2px -2px #a8a49c"><svg style="left:0;top:0" width="33" height="28" viewBox="0 0 33 28"><path d="M19.500 17.500L27.500 25.500" stroke="#808000" stroke-width="2.200"/><path d="M17.200 17.800l3.400 -3.400l0.200 3.600z" fill="#000090"/><circle cx="13.600" cy="11.300" r="7.300" fill="#fff" stroke="#101020" stroke-width="0.900"/><path d="M11 11.500H16.400" stroke="#000" stroke-width="1.200"/></svg></div>
<div class="a" style="left:427px;top:685px;width:35px;height:30px;border:1px solid #000;border-radius:3.5px;background:#d4d0c8;box-shadow:inset 1px 1px #fff,inset -1px -1px #808080,inset -2px -2px #a8a49c"><svg style="left:0;top:0" width="33" height="28" viewBox="0 0 33 28"><path d="M1.200 22.100L11.400 26.800L32 15L28.400 13.300L13.800 23.900z" fill="#d0d0d0"/><path d="M1.200 22.100L11.400 26.800L32 15L28.400 13.300" stroke="#000" stroke-width="1.100" fill="none"/><path d="M1.200 12.700L3.500 14V20.400L1.200 19.300z" fill="#fff"/><path d="M1.200 12.700L13.200 6.600L28.400 11L13.800 17.400L12 17.400L3.500 14z" fill="#e2e2e2"/><path d="M3.500 14L12 17.400V23.900L3.500 20.400z" fill="#c4c4c4"/><path d="M12 17.400H13.800V23.900H12z" fill="#e8e8e8"/><path d="M13.800 17.400L28.400 11V16.800L13.800 23.900z" fill="#949494"/><path d="M11.500 10.200L20 13.500" stroke="#404040" stroke-width="1.200"/><path d="M18.500 0.200L27.800 4L20.500 12.700L13.200 9.200z" fill="#fff"/><path d="M27.800 4L20.500 12.700" stroke="#000" stroke-width="1.200"/><path d="M18.500 0.200L13.200 9.200" stroke="#b0b0b0" stroke-width="0.600"/><path d="M19.200 3L22.800 4.500M17.600 5.200L21.200 6.700M16.200 7.300L19.800 8.800M15 9.400L18.600 10.900" stroke="#000090" stroke-width="1.300" stroke-dasharray="1.500 0.600"/><rect x="7" y="12.800" width="2" height="1.300" fill="#00e000"/><rect x="9.300" y="13.900" width="2" height="1.300" fill="#ff0000"/></svg></div>
</div>
</body></html>
